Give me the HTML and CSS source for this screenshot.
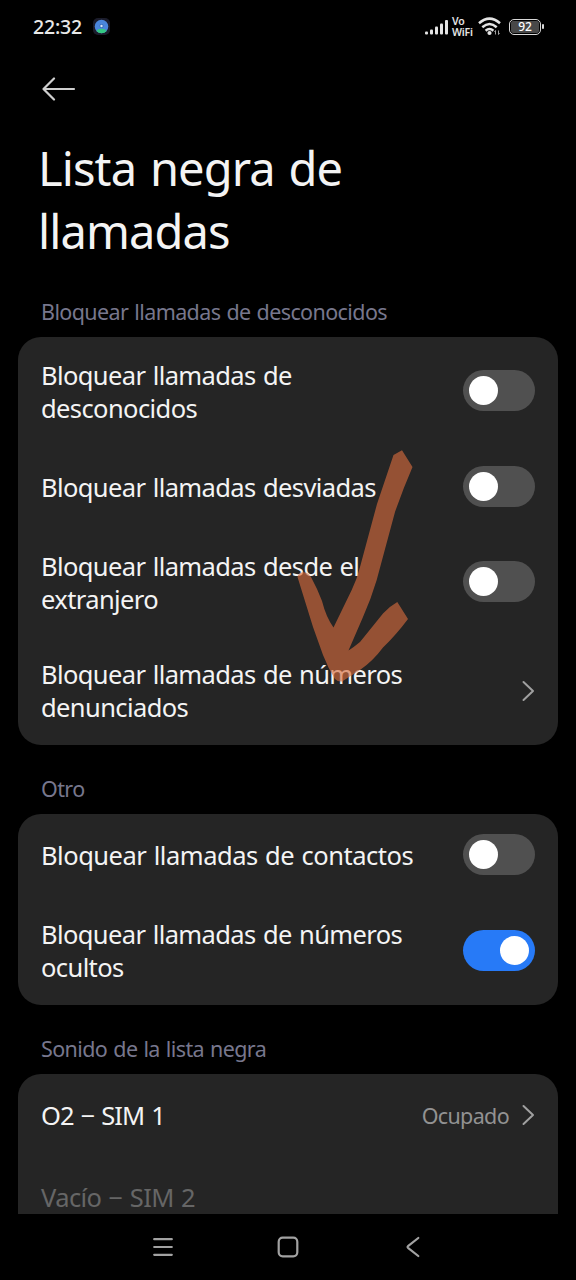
FILE: index.html
```html
<!DOCTYPE html>
<html lang="es">
<head>
<meta charset="utf-8">
<title>Lista negra de llamadas</title>
<link rel="stylesheet" href="styles.css">
</head>
<body>
<div class="screen">
  <header class="status">
    <span class="clock">22:32</span>
    <svg class="app-dot" width="17" height="17" viewBox="0 0 17 17"><rect width="17" height="17" rx="5" fill="#1b1c2b"/><circle cx="8.5" cy="8.5" r="6.8" fill="#4a86dc"/><path d="M3.400 13a6.800 6.800 0 0 0 10.200 0Q12 10.600 8.500 10.800 5 10.600 3.400 13z" fill="#35c983"/><circle cx="8.500" cy="8" r="2" fill="#3568b4"/><circle cx="8.500" cy="8" r="1.200" fill="#d9e6f7"/></svg>
    <div class="status-icons">
      <svg class="signal" width="23" height="15" viewBox="0 0 23 15" fill="#e4e4e4"><rect x="0" y="11.500" width="3" height="3" rx="1"/><rect x="5" y="9.500" width="3" height="5" rx="1"/><rect x="10" y="6.500" width="3" height="8" rx="1"/><rect x="15" y="3.500" width="3" height="11" rx="1"/><rect x="20" y="0" width="3" height="14.500" rx="1"/></svg>
      <div class="vowifi"><span class="vo">Vo</span><span>WiFi</span></div>
      <svg class="wifi" width="24" height="19" viewBox="0 0 24 19" fill="none" stroke="#e4e4e4" stroke-width="2.500"><path d="M1 6.300Q11.500-3 22 6.300M4.300 10.200Q11.500 3.800 18.700 10.200M7.600 13.700Q11.500 10.300 15.400 13.700"/><circle cx="11.500" cy="16" r="2.100" fill="#e4e4e4" stroke="none"/><path d="M17.500 17.500v-4l-1 1.500M20.500 13.500v4l1-1.500" stroke="#a0a0a0" stroke-width="1"/></svg>
      <div class="battery"><span class="battery-level">92</span></div>
    </div>
  </header>

  <svg class="back" width="34" height="24" viewBox="0 0 34 24" fill="none" stroke="#cfcfcf" stroke-width="2.200" stroke-linecap="round" stroke-linejoin="round"><path d="M12 1.500 1.500 12 12 22.500M1.500 12H32"/></svg>

  <h1 class="title">Lista negra de<br>llamadas</h1>

  <h2 class="label">Bloquear llamadas de desconocidos</h2>
  <section class="card">
    <div class="row tall"><span class="name">Bloquear llamadas de<br>desconocidos</span><span class="toggle"></span></div>
    <div class="row"><span class="name">Bloquear llamadas desviadas</span><span class="toggle"></span></div>
    <div class="row tall"><span class="name">Bloquear llamadas desde el<br>extranjero</span><span class="toggle"></span></div>
    <div class="row tall link"><span class="name">Bloquear llamadas de números<br>denunciados</span><svg class="chevron" width="13" height="22" viewBox="0 0 13 22"><path d="M1.500 2 11 11 1.500 20"/></svg></div>
  </section>

  <h2 class="label">Otro</h2>
  <section class="card">
    <div class="row"><span class="name wide">Bloquear llamadas de contactos</span><span class="toggle"></span></div>
    <div class="row tall"><span class="name">Bloquear llamadas de números<br>ocultos</span><span class="toggle on"></span></div>
  </section>

  <h2 class="label">Sonido de la lista negra</h2>
  <section class="card last">
    <div class="row"><span class="name sim">O2 − SIM 1</span><span class="value">Ocupado</span><svg class="chevron" width="13" height="22" viewBox="0 0 13 22"><path d="M1.500 2 11 11 1.500 20"/></svg></div>
    <div class="row disabled"><span class="name">Vacío − SIM 2</span></div>
  </section>

  <nav class="nav">
    <svg width="20" height="20" viewBox="0 0 20 20"><path d="M1.200 2.200h17.600M1.200 10h17.600M1.200 17.800h17.600"/></svg>
    <svg width="22" height="22" viewBox="0 0 22 22"><rect x="1.700" y="1.700" width="18.600" height="18.600" rx="4"/></svg>
    <svg width="14" height="22" viewBox="0 0 14 22"><path d="M12.300 2 2 10.200q-.9.800 0 1.600L12.300 20"/></svg>
  </nav>

  <svg class="arrow" width="116" height="232" viewBox="297 450 116 232"><path d="M393.500 455 402 450.300 412.500 467Q403 489 395 512L376.700 580Q371 599 363 617L348.500 650.500Q354 647 360 642L383 613.500Q390 606 397.300 602L408 619Q396 635 383 647.500 373 661 360 670L342 681.500Q338 682 335 679 328 668 323 655L313 627 297.500 577Q298 573 303 572.300 308 572 311 577 317 588 322 601 326 617 333.500 627.500L351.700 590Q357 579 360 567L377 504z"/></svg>
</div>
</body>
</html>
```
FILE: styles.css
```css
* { box-sizing: border-box; }
body { margin: 0; background: #000; }
.screen {
  position: relative;
  display: flex;
  flex-direction: column;
  width: 576px;
  height: 1280px;
  overflow: hidden;
  background: #000;
  color: #f4f4f4;
  font-family: "Noto Sans", "Open Sans", sans-serif;
}
.status {
  display: flex;
  align-items: center;
  flex: none;
  height: 53px;
  padding: 0 35px 0 33px;
}
.clock { width: 50px; font-size: 19.500px; font-weight: 500; letter-spacing: -0.200px; color: #e8e8e8; white-space: nowrap; }
.app-dot { margin-left: 10px; }
.status-icons { display: flex; align-items: center; margin-left: auto; }
.signal { margin-top: 1px; }
.vowifi {
  display: flex;
  flex-direction: column;
  width: 22px;
  margin: 0 4px 0 4px;
  font-size: 10.500px;
  font-weight: 600;
  line-height: 11px;
  letter-spacing: -0.200px;
  color: #e4e4e4;
}
.battery {
  position: relative;
  width: 32px;
  height: 16px;
  margin-left: 7px;
  padding: 1px;
  border: 1.500px solid #d8d8d8;
  border-radius: 5px;
}
.battery::after {
  content: "";
  position: absolute;
  right: -4px;
  top: 4px;
  width: 2px;
  height: 5px;
  border-radius: 1px;
  background: #d8d8d8;
}
.battery-level {
  display: block;
  height: 100%;
  border-radius: 2px;
  background: #484848;
  color: #fff;
  font-size: 12px;
  font-weight: 500;
  line-height: 12px;
  text-align: center;
}
.back { flex: none; margin: 24px 0 0 42px; }
.title {
  flex: none;
  margin: 36px 0 0 38px;
  font-size: 47px;
  font-weight: 400;
  line-height: 63px;
  letter-spacing: -0.900px;
  word-spacing: 2.500px;
}
.label {
  flex: none;
  height: 69px;
  margin: 0;
  padding: 28px 0 0 41px;
  font-size: 21.500px;
  font-weight: 400;
  line-height: 32px;
  letter-spacing: -0.600px;
  word-spacing: 1px;
  color: #77778d;
}
.title + .label { height: 74px; padding-top: 33px; }
.card {
  flex: none;
  margin: 0 18px;
  border-radius: 23px;
  background: #252525;
}
.card.last { height: 140px; border-radius: 23px 23px 0 0; overflow: hidden; }
.row {
  display: flex;
  align-items: center;
  height: 82px;
  padding: 0 23px;
}
.tall { height: 109px; }
.tall.link { height: 108px; }
.card .name { flex: 1; font-size: 25.500px; line-height: 33px; letter-spacing: -0.600px; word-spacing: 1.200px; white-space: nowrap; }
.card .wide { letter-spacing: -0.480px; }
.card .sim { letter-spacing: -0.900px; }
.disabled { color: #666; }
.toggle {
  width: 72px;
  height: 41px;
  margin-bottom: 2px;
  padding: 6px;
  border-radius: 21px;
  background: #505050;
}
.toggle::before {
  content: "";
  display: block;
  width: 29px;
  height: 29px;
  border-radius: 50%;
  background: #fff;
}
.toggle.on { margin-bottom: 0; background: #277af7; }
.toggle.on::before { margin-left: auto; }
.chevron { fill: none; stroke: #a0a0a0; stroke-width: 2; stroke-linecap: round; stroke-linejoin: round; }
.value { margin-right: 13px; font-size: 21.500px; letter-spacing: -0.650px; color: #929292; }
.nav {
  display: grid;
  grid-template-columns: repeat(3, 125px);
  justify-content: center;
  align-items: center;
  justify-items: center;
  flex: none;
  height: 66px;
}
.nav svg { fill: none; stroke: #a2a2a2; stroke-width: 2.200; stroke-linecap: round; }
.arrow { position: absolute; left: 297px; top: 450px; fill: #d76c3d; opacity: 0.630; }
```
